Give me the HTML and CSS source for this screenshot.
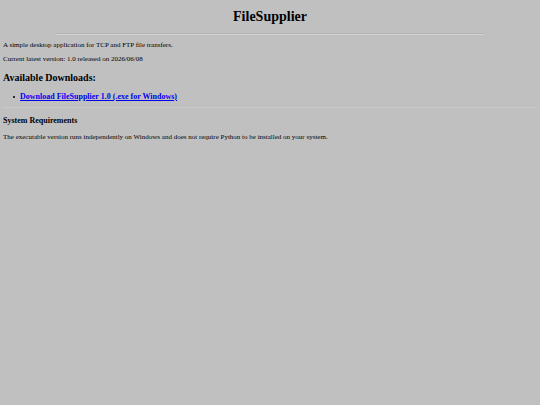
FILE: index.html
```html
<!DOCTYPE html>
<html lang="en">
<head>
<meta charset="utf-8">
<title>FileSupplier</title>
<link rel="stylesheet" href="styles.css">
</head>
<body>
<h1>FileSupplier</h1>
<hr class="title-rule">
<p>A simple desktop application for TCP and FTP file transfers.</p>
<p>Current latest version: 1.0 released on 2026/06/08</p>
<h2>Available Downloads:</h2>
<ul>
<li><a href="#download">Download FileSupplier 1.0 (.exe for Windows)</a></li>
</ul>
<hr class="section-rule">
<h3>System Requirements</h3>
<p>The executable version runs independently on Windows and does not require Python to be installed on your system.</p>
</body>
</html>
```
FILE: styles.css
```css
body {
  margin: 9px 3px;
  background: #c0c0c0;
  color: #000;
  font-family: "Liberation Serif", "Times New Roman", serif;
  font-size: 7px;
  line-height: 8px;
}

h1 {
  margin: 0 0 8px;
  font-size: 14px;
  line-height: 16px;
  text-align: center;
}

h2 {
  margin: 9px 0 8px;
  font-size: 10px;
  line-height: 12px;
}

h3 {
  margin: 9px 0 8px;
  font-size: 8px;
  line-height: 8px;
}

p {
  margin: 6px 0;
}

ul {
  margin: 8px 0 6px;
  padding: 0 0 0 10px;
  list-style: none;
}

li {
  display: flex;
  align-items: center;
  gap: 5px;
  line-height: 9px;
}

li::before {
  content: "";
  width: 2px;
  height: 2px;
  border-radius: 50%;
  background: #000;
}

a {
  color: #0000ee;
  font-size: 8px;
  font-weight: bold;
}

hr {
  height: 1px;
  border: 0;
}

.title-rule {
  width: 80%;
  margin: 0 auto 6px;
  border-top: 1px solid #b4b4b4;
  background: #d2d2d2;
}

.section-rule {
  margin: 6px 0 9px;
  background: #c8c8c8;
}
```
